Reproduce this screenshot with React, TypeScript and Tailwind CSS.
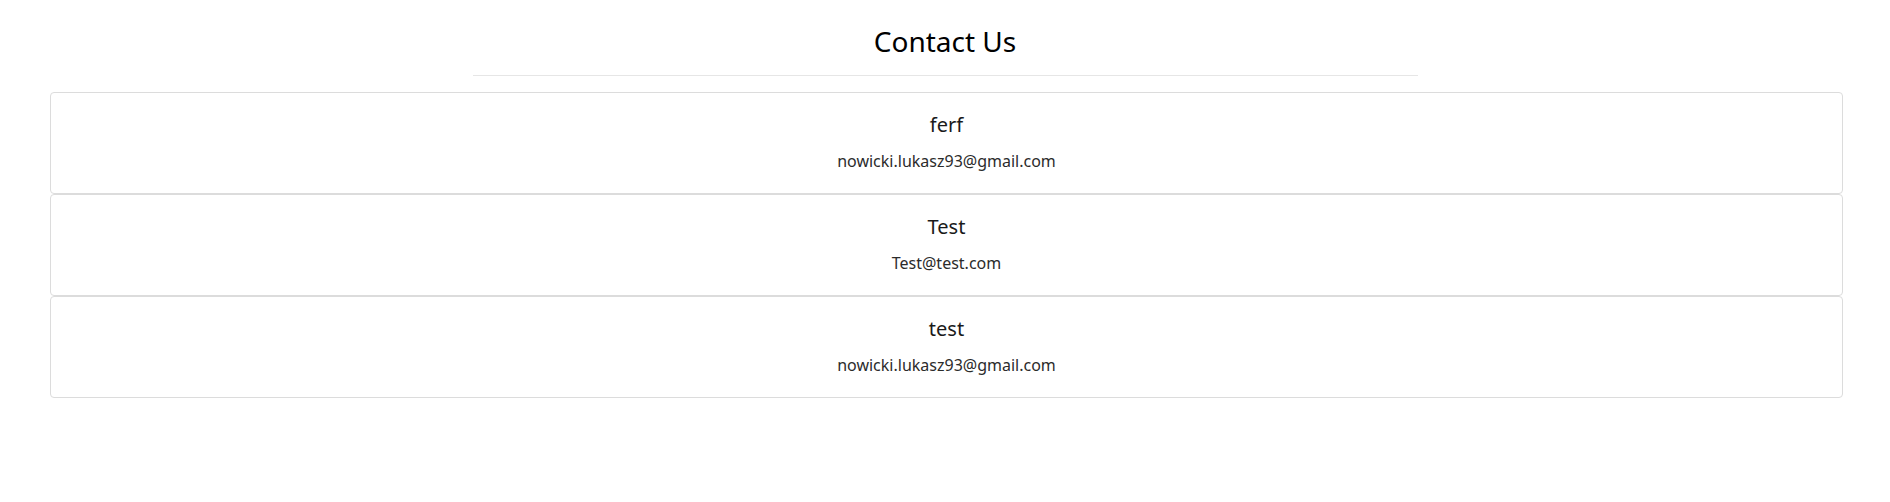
import React from "react";

const contacts = [
  { name: "ferf", email: "nowicki.lukasz93@gmail.com" },
  { name: "Test", email: "Test@test.com" },
  { name: "test", email: "nowicki.lukasz93@gmail.com" },
];

const ContactCard = ({ name, email }: { name: string; email: string }) => {
  return (
    <div className="border border-[#dcdcdc] rounded-[4px] bg-white pt-[17px] pb-[20px] text-center">
      <h5 className="text-[20px] leading-[30px] text-[#1a1a1a]">{name}</h5>
      <p className="mt-[9px] text-[16px] leading-[24px] text-[#2b2b2b]">{email}</p>
    </div>
  );
};

export default function App() {
  return (
    <div className="min-h-[502px] bg-white font-['Noto_Sans',sans-serif]">
      {/* Header */}
      <div className="pt-[25px] text-center">
        <h2 className="text-[28px] leading-[1.2] text-black">Contact Us</h2>
        <hr className="mx-auto mt-[16px] w-1/2 border-0 border-t border-[#e6e6e6]" />
      </div>

      {/* Contact list */}
      <div className="mt-[16px] pl-[50px] pr-[47px] flex flex-col">
        {contacts.map((c, idx) => (
          <ContactCard key={idx} name={c.name} email={c.email} />
        ))}
      </div>
    </div>
  );
}
